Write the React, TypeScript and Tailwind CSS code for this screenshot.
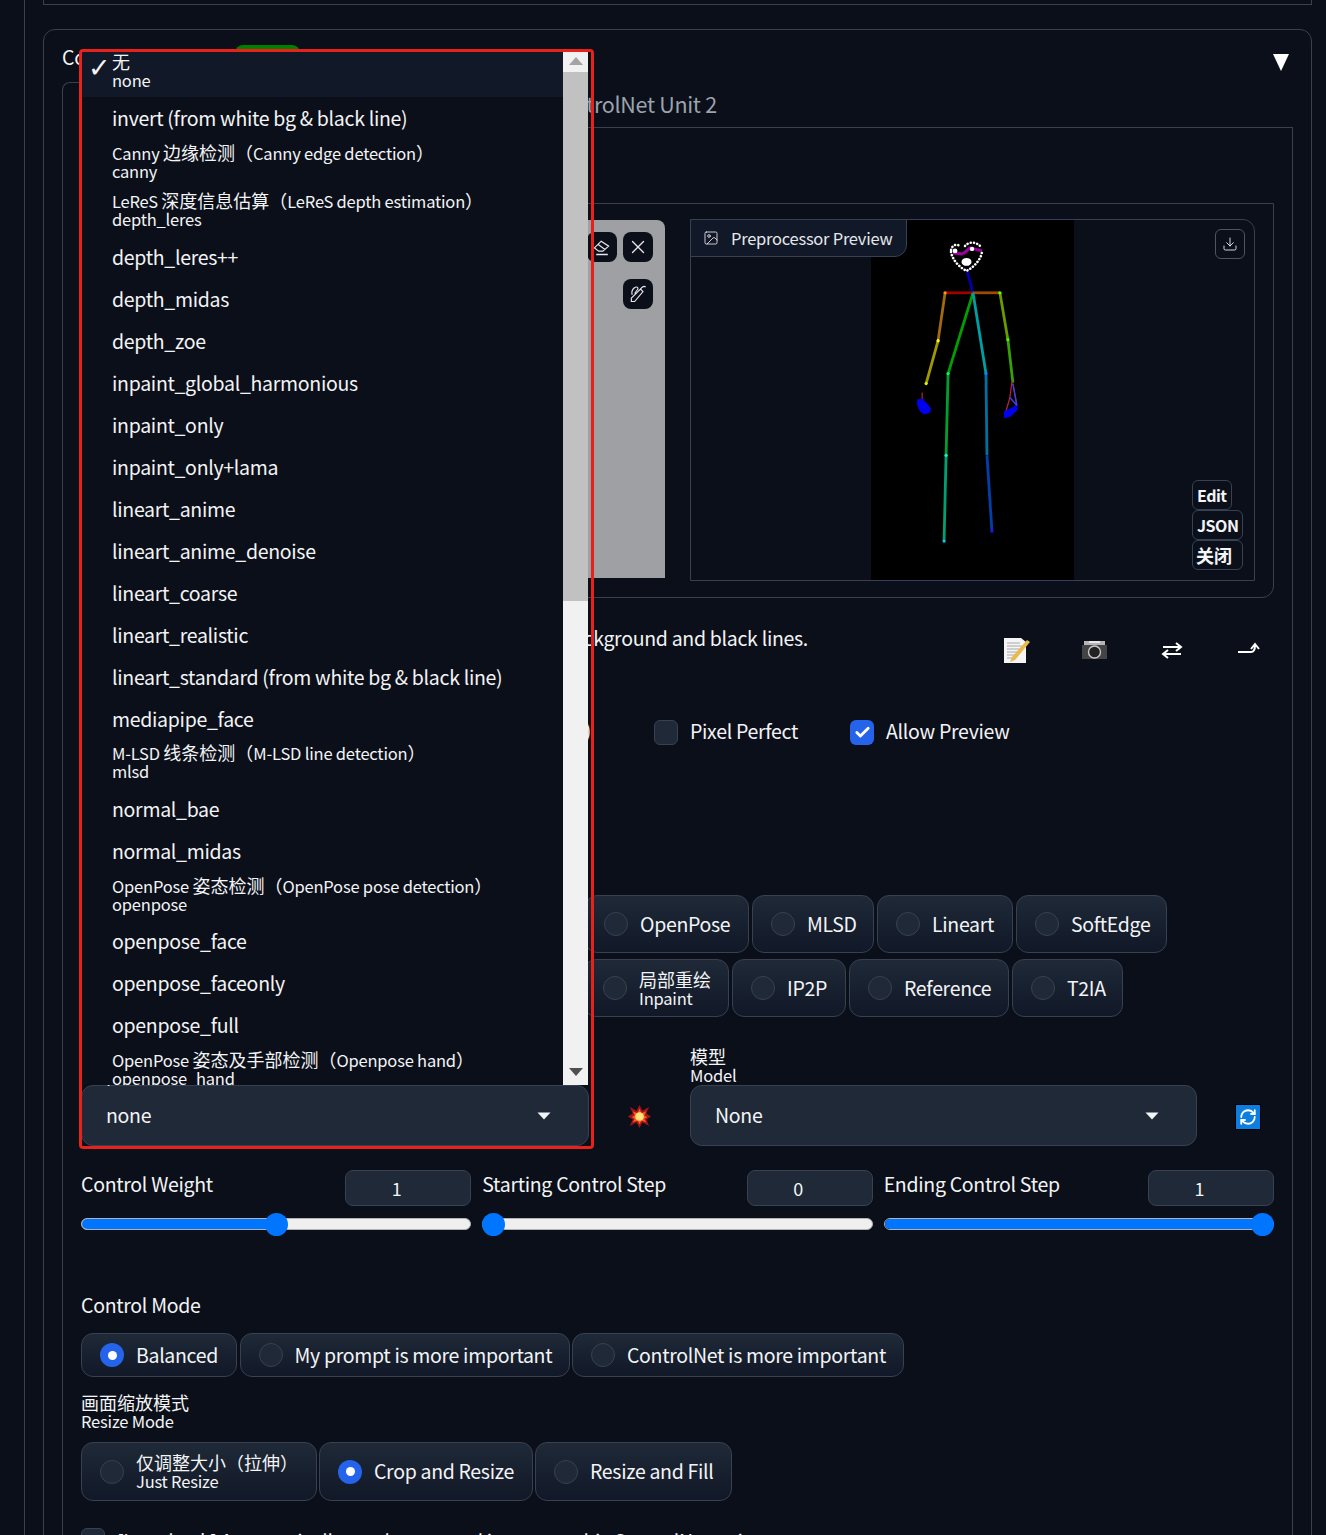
import type { ReactNode } from 'react'
import { Check, Download, Image, RefreshCw, X } from 'lucide-react'

const options = [
  { zh: '无', en: 'none', active: true },
  { en: 'invert (from white bg & black line)' },
  { zh: 'Canny 边缘检测（Canny edge detection）', en: 'canny' },
  { zh: 'LeReS 深度信息估算（LeReS depth estimation）', en: 'depth_leres' },
  { en: 'depth_leres++' },
  { en: 'depth_midas' },
  { en: 'depth_zoe' },
  { en: 'inpaint_global_harmonious' },
  { en: 'inpaint_only' },
  { en: 'inpaint_only+lama' },
  { en: 'lineart_anime' },
  { en: 'lineart_anime_denoise' },
  { en: 'lineart_coarse' },
  { en: 'lineart_realistic' },
  { en: 'lineart_standard (from white bg & black line)' },
  { en: 'mediapipe_face' },
  { zh: 'M-LSD 线条检测（M-LSD line detection）', en: 'mlsd' },
  { en: 'normal_bae' },
  { en: 'normal_midas' },
  { zh: 'OpenPose 姿态检测（OpenPose pose detection）', en: 'openpose' },
  { en: 'openpose_face' },
  { en: 'openpose_faceonly' },
  { en: 'openpose_full' },
  { zh: 'OpenPose 姿态及手部检测（Openpose hand）', en: 'openpose_hand' },
]

const sliders = [
  { label: 'Control Weight', value: '1', pct: 50 },
  { label: 'Starting Control Step', value: '0', pct: 0 },
  { label: 'Ending Control Step', value: '1', pct: 100 },
]

const bones = [
  ['967,271', '973,293', '#0000a8'],
  ['973,293', '945,293', '#a00000'],
  ['973,293', '1000,293', '#a04c00'],
  ['945,293', '938,341', '#a06a10'],
  ['938,341', '926,384', '#a09a00'],
  ['1000,293', '1008,340', '#6a9a00'],
  ['1008,340', '1013,383', '#38a000'],
  ['973,293', '948,374', '#00a000'],
  ['948,374', '946,456', '#00a030'],
  ['946,456', '944,542', '#00a070'],
  ['973,293', '986,374', '#00a0a0'],
  ['986,374', '987,456', '#0070a0'],
  ['987,456', '992,532', '#0040a8'],
]

const joints = [
  ['945,293', '#ff9900'],
  ['1000,293', '#66ff00'],
  ['938,341', '#ffff00'],
  ['926,384', '#ccff00'],
  ['1008,340', '#33ff00'],
  ['948,374', '#00ff55'],
  ['986,374', '#0088ff'],
  ['946,456', '#00ffcc'],
  ['944,542', '#00ccff'],
  ['992,532', '#3300ff'],
]

// CJK runs keep 18px, the latin around them is set tighter
function Mixed({ text }: { text: string }) {
  return (
    <span className="whitespace-nowrap text-[16.5px] tracking-[-0.2px]">
      {text.split(/([\u3000-\u9fff\uff00-\uffef]+)/).map((part, i) =>
        i % 2 ? (
          <span key={i} className="text-[18px] tracking-normal">{part}</span>
        ) : (
          part
        ),
      )}
    </span>
  )
}

function Pose() {
  return (
    <svg viewBox="871 220 203 361" className="h-full w-[203px] bg-black">
      {bones.map(([a, b, c]) => {
        const [x1, y1] = a.split(',')
        const [x2, y2] = b.split(',')
        return <line key={a + b} x1={x1} y1={y1} x2={x2} y2={y2} stroke={c} strokeWidth="2.8" />
      })}
      {joints.map(([p, c]) => {
        const [cx, cy] = p.split(',')
        return <circle key={p} cx={cx} cy={cy} r="1.6" fill={c} />
      })}
      <path d="M953 253 L963 254 M963 254 L970 248 L982 251" stroke="#a000a0" strokeWidth="3" fill="none" />
      <g fill="none" stroke="#fff" strokeWidth="2.6" strokeLinecap="round" strokeDasharray="0.1 3.2">
        <path d="M951 252 C952 260 960 268 966.5 271 C973 268 981 260 982 252" />
        <path d="M951 250 C952 245 957 243 961 247" />
        <path d="M965 246 C968 242 976 241 981 247" />
      </g>
      <ellipse cx="966.5" cy="262" rx="5" ry="4" fill="#fff" />
      <circle cx="955" cy="251" r="2.4" fill="#fff" />
      <circle cx="972" cy="249" r="2.2" fill="#fff" />
      <path d="M922 393 L922 400 M1012 382 L1010 398 L1006 412 M1013 384 L1017 406" stroke="#c02040" strokeWidth="1.2" fill="none" />
      <path d="M917 400 L922 399 L926 403 L931 409 L930 413 L924 415 L920 412 L917 406 Z" fill="#0000f0" />
      <path d="M1004 412 L1012 408 L1017 405 L1018 410 L1011 417 L1004 419 Z" fill="#0000f0" />
      <path d="M1013 384 L1017 406 M1010 398 L1017 406" stroke="#4040e0" strokeWidth="1.4" fill="none" />
    </svg>
  )
}

function Radio({ on = false }: { on?: boolean }) {
  return (
    <span
      className={
        on
          ? 'flex h-6 w-6 shrink-0 items-center justify-center rounded-full bg-[#2563eb]'
          : 'h-6 w-6 shrink-0 rounded-full border border-[#374151] bg-[#1f2937]'
      }
    >
      {on && <span className="h-[9px] w-[9px] rounded-full bg-white" />}
    </span>
  )
}

function Pill({ on, children, className = '' }: { on?: boolean; children: ReactNode; className?: string }) {
  return (
    <div
      className={`flex items-center gap-3 rounded-xl border border-[#374151] bg-linear-to-b from-[#1f2937] to-[#111827] pl-[18px] text-[19.5px] tracking-[-0.32px] ${className}`}
    >
      <Radio on={on} />
      <span className="-mt-px whitespace-nowrap">{children}</span>
    </div>
  )
}

function TwoLine({ zh, en }: { zh: string; en: string }) {
  return (
    <span className="mt-[1px] flex flex-col leading-[18px]">
      <Mixed text={zh} />
      <Mixed text={en} />
    </span>
  )
}

function CheckBox({ on = false }: { on?: boolean }) {
  return (
    <span
      className={
        on
          ? 'flex h-[25px] w-6 items-center justify-center rounded-md bg-[#2563eb]'
          : 'h-[25px] w-6 rounded-md border border-[#374151] bg-[#1f2937]'
      }
    >
      {on && <Check size={17} strokeWidth={4} className="text-white" />}
    </span>
  )
}

function Arrow() {
  return (
    <svg width="14" height="8" viewBox="0 0 14 8" className="shrink-0">
      <path d="M0.5 0.5 H13.5 L7 7.5 Z" fill="#f3f4f6" />
    </svg>
  )
}

function Select({ value }: { value: string }) {
  return (
    <div className="flex h-[61px] items-center justify-between rounded-xl border border-[#374151] bg-[#1f2937] pl-6 pr-[37px] text-[19.5px] tracking-[-0.3px]">
      <span className="-mt-[2px]">{value}</span>
      <Arrow />
    </div>
  )
}

function SmallButton({ children }: { children: ReactNode }) {
  return (
    <div className="flex h-[30px] w-[30px] items-center justify-center rounded-lg bg-[#0b0f19] text-[#e5e7eb]">
      {children}
    </div>
  )
}

function ToolIcons() {
  return (
    <div className="ml-auto mr-[10px] flex items-center gap-[47px]">
      <svg width="30" height="30" viewBox="0 0 30 30">
        <path d="M1 3 H18 L23 7 V28 H1 Z" fill="#f5f5f5" />
        <path d="M4 8 H17 M4 11 H19 M4 14 H18 M4 17 H14 M4 20 H12 M4 23 H10" stroke="#a8a8a8" strokeWidth="1" />
        <path d="M24 5 L27 7 L12 25 L7 27 L9 22 Z" fill="#e9b949" />
      </svg>
      <svg width="30" height="30" viewBox="0 0 30 30">
        <path d="M2 10 H27 V24 H2 Z" fill="#444" />
        <path d="M4 6 H25 V10 H4 Z" fill="#b5b5b5" />
        <path d="M9 6 H20 V8 H9 Z" fill="#e8e8e8" />
        <circle cx="14.5" cy="17" r="6" fill="#222" stroke="#c8c8c8" strokeWidth="1.4" />
      </svg>
      <svg width="30" height="30" viewBox="0 0 30 30" fill="none" stroke="#fff" strokeWidth="2">
        <path d="M6 12 H24 M19 8 L24 12 L19 16 M24 19 H6 M11 15 L6 19 L11 23" />
      </svg>
      <svg width="30" height="30" viewBox="0 0 30 30" fill="none" stroke="#fff" strokeWidth="2">
        <path d="M4 17 H17 C20 17 21 15 21 10 M17 14 L21 9 L25 14" />
      </svg>
    </div>
  )
}

function Dropdown() {
  return (
    <div className="absolute left-[82px] top-[49px] flex h-[1036px] w-[506px] bg-[#0b0f19] text-[#f3f4f6]">
      <div className="flex-1 overflow-hidden">
        {options.map((o) =>
          o.zh ? (
            <div
              key={o.en}
              className={`relative flex h-[48.4px] flex-col justify-center pb-[5px] pl-[30px] leading-[18px] ${o.active ? 'bg-[#111827]' : ''}`}
            >
              {o.active && <span className="absolute left-[6px] top-0 text-[27px] leading-[38px] font-['DejaVu_Sans',sans-serif]">✓</span>}
              <Mixed text={o.zh} />
              <Mixed text={o.en} />
            </div>
          ) : (
            <div key={o.en} className="flex h-[42px] items-center pb-[2px] pl-[30px] text-[19.5px] tracking-[-0.3px]">
              {o.en}
            </div>
          ),
        )}
      </div>
      <div className="flex w-[25px] flex-col bg-[#f1f1f1]">
        <div className="flex h-[23px] items-center justify-center">
          <svg width="14" height="8" viewBox="0 0 14 8"><path d="M7 0 L14 8 H0 Z" fill="#a3a3a3" /></svg>
        </div>
        <div className="h-[529px] bg-[#c1c1c1]" />
        <div className="flex-1" />
        <div className="flex h-[23px] items-start justify-center pt-[6px]">
          <svg width="14" height="8" viewBox="0 0 14 8"><path d="M0 0 H14 L7 8 Z" fill="#505050" /></svg>
        </div>
      </div>
    </div>
  )
}

export default function App() {
  return (
    <div className="relative h-[1535px] overflow-hidden bg-[#0b0f19] text-[#f3f4f6] font-['Noto_Sans_CJK_SC','Liberation_Sans',sans-serif]">
      <div className="ml-6 h-[1535px] border-l border-[#374151] pl-[18px]">
        <div className="h-[5px] w-[1269px] border-x border-b border-[#374151]" />

        <div className="mt-6 h-[1600px] w-[1269px] rounded-xl border border-[#374151] px-[18px]">
          <div className="flex h-[52px] items-center">
            <span className="w-[173px] translate-y-px text-[19.5px] tracking-[-0.3px]">Control</span>
            <span className="h-[24px] w-[65px] translate-y-px rounded-lg bg-[#008000]" />
            <svg width="18" height="18" viewBox="0 0 18 18" className="ml-auto mr-[3px] translate-y-[6px]">
              <path d="M1 1 H17 L9 18 Z" fill="#fff" />
            </svg>
          </div>

          <div className="flex h-[46px] border-b border-[#374151] text-[21.5px] leading-[44px] tracking-[-0.3px] text-[#9ca3af]">
            <div className="h-[46px] w-[228px] rounded-t-lg border-x border-t border-[#374151] bg-[#0b0f19] text-center text-[#f3f4f6]">ControlNet Unit 0</div>
            <div className="w-[228px] text-center">ControlNet Unit 1</div>
            <div className="w-[228px] text-center">ControlNet Unit 2</div>
          </div>

          <div className="h-[1500px] w-[1231px] border-x border-[#374151] px-[18px]">
            <div className="h-[75px] pt-4 text-[19.5px]">Single Image</div>

            <div className="flex h-[395px] w-[1193px] rounded-br-xl border border-[#374151] pl-[16px] pt-4">
              <div className="h-[358px] w-[567px] rounded-tr-lg bg-[#9ea0a3] pr-3 pt-[12px]">
                <div className="flex justify-end gap-1.5">
                  <SmallButton>
                    <svg width="20" height="20" viewBox="0 0 24 24" fill="none" stroke="currentColor" strokeWidth="1.4">
                      <path d="M3 13 L11 5 L20 11 L13 17 H8 Z M7.5 9 L15.5 15" />
                      <path d="M5 21 H19" strokeWidth="1.8" />
                    </svg>
                  </SmallButton>
                  <SmallButton><X size={22} strokeWidth={1.5} /></SmallButton>
                </div>
                <div className="mt-[17px] flex justify-end">
                  <SmallButton>
                    <svg width="20" height="20" viewBox="0 0 24 24" fill="none" stroke="currentColor" strokeWidth="1.4">
                      <path d="M4 17 L15 6 L18 9 L8 21 L4 21 Z" />
                      <path d="M5 13 C3 6 11 1 12 5 C12.500 8 7 9 9 12" />
                      <path d="M15 6 C17 3 20 2 21 4" />
                    </svg>
                  </SmallButton>
                </div>
              </div>

              <div className="relative -mt-px ml-[25px] flex h-[362px] w-[565px] justify-center rounded-tr-xl border border-[#374151]">
                <Pose />
                <div className="absolute -left-px -top-px flex h-[38px] w-[217px] items-center gap-3 rounded-br-xl border border-[#374151] bg-[#111827] pl-[12px] text-[16.5px] tracking-[-0.25px] text-[#e5e7eb]">
                  <Image size={16} strokeWidth={1.3} />
                  Preprocessor Preview
                </div>
                <div className="absolute right-[9px] top-[9px] flex h-[30px] w-[30px] items-center justify-center rounded-md border border-[#4b5563] bg-[#0b0f19]">
                  <Download size={16} strokeWidth={1.3} />
                </div>
                <div className="absolute bottom-[10px] left-[501px] flex flex-col items-start text-[16px] font-bold leading-[28px] tracking-[-0.5px]">
                  <span className="h-[30px] rounded-md border border-[#374151] bg-[#0b0f19] px-1">Edit</span>
                  <span className="h-[30px] rounded-md border border-[#374151] bg-[#0b0f19] px-1">JSON</span>
                  <span className="h-[30px] w-[51px] rounded-md border border-[#374151] bg-[#0b0f19] px-[3px] text-[18px] tracking-normal">关闭</span>
                </div>
              </div>
            </div>

            <div className="mt-[27px] flex h-[50px]">
              <p className="h-[28px] w-[727px] -translate-y-px whitespace-nowrap text-right text-[19.5px] leading-[28px] tracking-[-0.3px]">
                Invert colors if your image has white background and black lines.
              </p>
              <ToolIcons />
            </div>

            <div className="mt-[44px] flex h-[26px] items-center text-[19.5px] tracking-[-0.3px]">
              <div className="w-[510px] -translate-y-[2px] whitespace-nowrap text-right">低显存模式 (Low VRAM)</div>
              <div className="ml-[63px] flex items-center gap-3">
                <CheckBox />
                <span className="-mt-[2px]">Pixel Perfect</span>
              </div>
              <div className="ml-[52px] flex items-center gap-3">
                <CheckBox on />
                <span className="-mt-[2px]">Allow Preview</span>
              </div>
            </div>

            <div className="mt-[104px] h-[46px] text-[19.5px] tracking-[-0.3px]">Control Type</div>
            <div className="flex h-[58px] gap-[3px]">
              <Pill on className="w-[123px]">All</Pill>
              <Pill className="w-[123px]">Canny</Pill>
              <Pill className="w-[123px]">Depth</Pill>
              <Pill className="w-[123px]">Normal</Pill>
              <Pill className="w-[164px]">OpenPose</Pill>
              <Pill className="w-[122px]">MLSD</Pill>
              <Pill className="w-[136px]">Lineart</Pill>
              <Pill className="w-[151px]">SoftEdge</Pill>
            </div>
            <div className="mt-1.5 flex h-[58px] gap-[3px]">
              <Pill className="w-[123px]">Scribble</Pill>
              <Pill className="w-[123px]">Seg</Pill>
              <Pill className="w-[123px]">Shuffle</Pill>
              <Pill className="w-[122px]">Tile</Pill>
              <Pill className="w-[145px]"><TwoLine zh="局部重绘" en="Inpaint" /></Pill>
              <Pill className="w-[114px]">IP2P</Pill>
              <Pill className="w-[160px]">Reference</Pill>
              <Pill className="w-[111px]">T2IA</Pill>
            </div>

            <div className="mt-[30px] flex">
              <div className="w-[508px]">
                <div className="flex h-[38px] flex-col leading-[18px]">
                  <Mixed text="预处理器" />
                  <Mixed text="Preprocessor" />
                </div>
                <Select value="none" />
              </div>
              <div className="mr-px flex w-[100px] items-end justify-center pb-[17px]">
                <svg width="25" height="25" viewBox="0 0 26 26">
                  <path d="M13 1 L16 7 L23 3 L20 10 L25 13 L20 16 L23 23 L16 19 L13 25 L10 19 L3 23 L6 16 L1 13 L6 10 L3 3 L10 7 Z" fill="#a81414" />
                  <path d="M13 5 L15 9.500 L20 7.500 L18 12 L21 13.500 L18 15.500 L20 19 L15 17.500 L13 21 L11 17.500 L6 19 L8 15.500 L5 13.500 L8 12 L6 7.500 L11 9.500 Z" fill="#ff5a1f" />
                  <circle cx="13" cy="13" r="4.500" fill="#ffe27a" />
                </svg>
              </div>
              <div className="w-[507px]">
                <div className="flex h-[38px] flex-col leading-[18px]">
                  <Mixed text="模型" />
                  <Mixed text="Model" />
                </div>
                <Select value="None" />
              </div>
              <div className="ml-[39px] flex items-end pb-[17px]">
                <div className="flex h-6 w-6 items-center justify-center bg-[#0d7de0] ring-1 ring-black">
                  <RefreshCw size={18} strokeWidth={2.4} className="text-white" />
                </div>
              </div>
            </div>

            <div className="mt-6 grid w-[1193px] grid-cols-3 gap-x-[11px]">
              {sliders.map((s) => (
                <div key={s.label}>
                  <div className="flex h-9 items-start justify-between">
                    <span className="-mt-[1px] text-[19.5px] leading-[30px] tracking-[-0.3px]">{s.label}</span>
                    <span className="flex h-9 w-[126px] items-center justify-center rounded-lg border border-[#374151] bg-[#1f2937] pr-[23px] text-[18px]">{s.value}</span>
                  </div>
                  <div className="relative mt-1.5 flex h-6 items-center">
                    <div className="h-3 w-full overflow-hidden rounded-md border border-[#b2b2b2] bg-[#efefef]">
                      <div className="h-full bg-[#0075ff]" style={{ width: `${s.pct}%` }} />
                    </div>
                    <span
                      className="absolute h-[23px] w-[23px] rounded-full bg-[#0075ff]"
                      style={{ left: `calc((100% - 23px) * ${s.pct / 100})` }}
                    />
                  </div>
                </div>
              ))}
            </div>

            <div className="mt-[57px] h-[26px] text-[19.5px] leading-[24px] tracking-[-0.3px]">Control Mode</div>
            <div className="mt-[14px] flex h-[44px] gap-[2.5px]">
              <Pill on className="w-[156px]">Balanced</Pill>
              <Pill className="w-[330px]">My prompt is more important</Pill>
              <Pill className="w-[332px]">ControlNet is more important</Pill>
            </div>

            <div className="mt-4 flex flex-col leading-[18px]">
              <Mixed text="画面缩放模式" />
              <Mixed text="Resize Mode" />
            </div>
            <div className="mt-[12px] flex h-[59px] gap-[2px]">
              <Pill className="w-[236px]"><TwoLine zh="仅调整大小（拉伸）" en="Just Resize" /></Pill>
              <Pill on className="w-[214px]">Crop and Resize</Pill>
              <Pill className="w-[197px]">Resize and Fill</Pill>
            </div>

            <div className="mt-[25px] flex items-center gap-3 text-[19.5px] tracking-[-0.3px]">
              <CheckBox />
              [Loopback] Automatically send generated images to this ControlNet unit
            </div>
          </div>
        </div>
      </div>

      <Dropdown />
      {/* annotation frame around the open dropdown */}
      <div className="pointer-events-none absolute left-[79px] top-[49px] h-[1100px] w-[515px] rounded-sm border-[3px] border-[#e8211b]" />
    </div>
  )
}
